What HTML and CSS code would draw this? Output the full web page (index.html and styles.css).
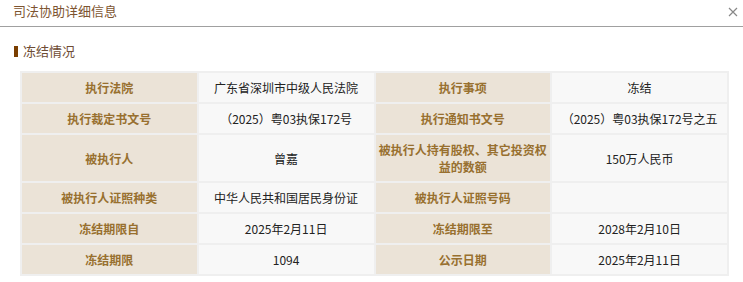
FILE: index.html
```html
<!DOCTYPE html>
<html lang="zh">
<head>
<meta charset="utf-8">
<link rel="stylesheet" href="styles.css">
</head>
<body>
<div class="dialog">
  <div class="header">
    <span class="title">司法协助详细信息</span>
    <svg class="close" width="10" height="10" viewBox="0 0 10 10"><path d="M1 1L9 9M9 1L1 9" stroke="#888" stroke-width="1.2" fill="none"/></svg>
  </div>
  <div class="section">
    <div class="section-title"><span class="bar"></span>冻结情况</div>
    <table class="info">
      <tr><td class="lbl">执行法院</td><td class="val">广东省深圳市中级人民法院</td><td class="lbl">执行事项</td><td class="val">冻结</td></tr>
      <tr><td class="lbl">执行裁定书文号</td><td class="val">（2025）粤03执保172号</td><td class="lbl">执行通知书文号</td><td class="val">（2025）粤03执保172号之五</td></tr>
      <tr><td class="lbl">被执行人</td><td class="val">曾嘉</td><td class="lbl">被执行人持有股权、其它投资权益的数额</td><td class="val">150万人民币</td></tr>
      <tr><td class="lbl">被执行人证照种类</td><td class="val">中华人民共和国居民身份证</td><td class="lbl">被执行人证照号码</td><td class="val"></td></tr>
      <tr><td class="lbl">冻结期限自</td><td class="val">2025年2月11日</td><td class="lbl">冻结期限至</td><td class="val">2028年2月10日</td></tr>
      <tr><td class="lbl">冻结期限</td><td class="val">1094</td><td class="lbl">公示日期</td><td class="val">2025年2月11日</td></tr>
    </table>
  </div>
</div>
</body>
</html>
```

FILE: styles.css
```css
html, body {
  margin: 0;
  padding: 0;
  background: #fff;
  font-family: "Noto Sans CJK SC", "Noto Sans", sans-serif;
}
.dialog {
  width: 743px;
}
.header {
  display: flex;
  align-items: center;
  justify-content: space-between;
  height: 27px;
  padding: 0 5px 0 13px;
  box-sizing: border-box;
  border-bottom: 1px solid #a0a0a0;
}
.title {
  font-size: 13px;
  line-height: 22px;
  color: #7d5430;
  margin-top: -5px;
}
.close {
  margin-top: -3px;
}
.section {
  padding: 15px 14px 0 20px;
}
.section-title {
  display: flex;
  align-items: center;
  margin-left: -6px;
  font-size: 13px;
  line-height: 18px;
  color: #6e4c34;
  height: 18px;
}
.bar {
  display: inline-block;
  width: 4px;
  height: 11px;
  background: #7a3e00;
  margin-right: 5px;
}
.info {
  margin-top: 11px;
  width: 709px;
  border-collapse: collapse;
  table-layout: fixed;
  font-size: 12px;
  line-height: 17px;
}
.info td {
  border: 2px solid #efefef;
  padding: 6px 2px;
  text-align: center;
  height: 17px;
}
.lbl {
  background: #ebe3d7;
  color: #98702f;
  font-weight: bold;
}
.val {
  background: #f8f8f8;
  color: #222;
}
```
